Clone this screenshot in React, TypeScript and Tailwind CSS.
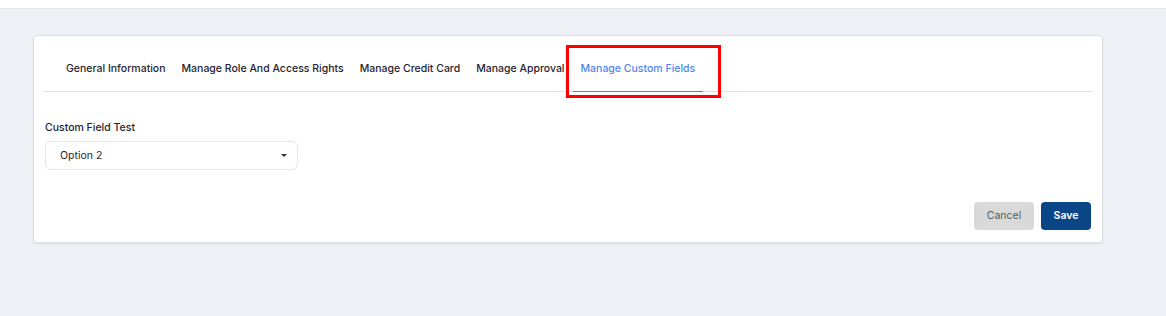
import { useState } from 'react';

const tabs = [
  'General Information',
  'Manage Role And Access Rights',
  'Manage Credit Card',
  'Manage Approval',
  'Manage Custom Fields',
];

export default function App() {
  const [active, setActive] = useState(4);

  return (
    <div
      className="min-h-[316px] w-full bg-[#edf1f5] text-[#212529]"
      style={{ fontFamily: 'Inter, "Noto Sans", sans-serif' }}
    >
      <div className="h-[9px] bg-white border-b border-[#e1e5ea]" />

      <div className="pl-[33px] pr-[63px] pt-[26px]">
        <div className="rounded-[4px] border border-[#dcdfe3] bg-white px-[11px] pt-[11px] pb-[12px] shadow-[0_1px_2px_rgba(0,0,0,0.08)]">
          <div className="relative flex border-b border-[#dcdfe3] pl-[13px]">
            {tabs.map((t, i) => (
              <button
                key={t}
                onClick={() => setActive(i)}
                className={`-mb-px px-2 pt-[14px] pb-[15px] text-[10.5px] font-medium leading-[15px] whitespace-nowrap ${
                  active === i
                    ? 'border-b border-[#4a7fe6] text-[#4f86ee]'
                    : 'border-b border-transparent text-[#1f2430]'
                }`}
              >
                {t}
              </button>
            ))}
            <div className="pointer-events-none absolute left-[521px] top-[-2px] h-[53px] w-[155px] border-[3px] border-[#ff0000]" />
          </div>

          <div className="pt-[29px]">
            <div className="text-[10.5px] font-medium leading-[14px] text-[#1f2430]">Custom Field Test</div>
            <div className="mt-[6px] flex h-[29px] w-[253px] items-center justify-between rounded-[6px] border border-[#e3e6ec] pl-[14px] pr-[9px]">
              <span className="text-[10.5px] text-[#1f2430]">Option 2</span>
              <svg width="8" height="5" viewBox="0 0 8 5">
                <path d="M1 1h6L4 4z" fill="#333" />
              </svg>
            </div>
          </div>

          <div className="mt-[32px] flex justify-end gap-[7px]">
            <button className="h-[28px] w-[60px] rounded-[4px] bg-[#d9d9d9] text-[10.5px] text-[#555a61]">
              Cancel
            </button>
            <button className="h-[28px] w-[50px] rounded-[4px] bg-[#0a4586] text-[10.5px] font-semibold text-white">
              Save
            </button>
          </div>
        </div>
      </div>
    </div>
  );
}
